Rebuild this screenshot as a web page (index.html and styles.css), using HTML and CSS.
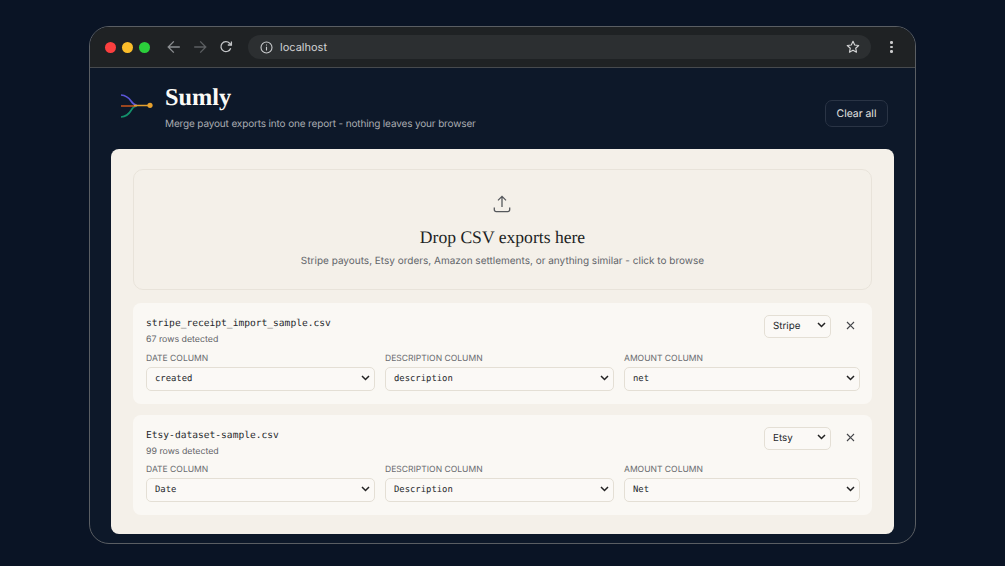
FILE: index.html
```html
<!DOCTYPE html>
<html lang="en">
<head>
<meta charset="utf-8">
<title>Sumly</title>
<link rel="stylesheet" href="styles.css">
</head>
<body>
<div class="window">
  <div class="toolbar">
    <div class="lights"><span class="light red"></span><span class="light yellow"></span><span class="light green"></span></div>
    <div class="nav">
      <svg class="nav-icon" width="14" height="14" viewBox="0 0 14 14" fill="none" stroke="#8b8e91" stroke-width="1.3"><path d="M12.8 7H1.4M6.8 1.4 1.2 7l5.6 5.6"/></svg>
      <svg class="nav-icon" width="14" height="14" viewBox="0 0 14 14" fill="none" stroke="#5c5f62" stroke-width="1.3"><path d="M1.2 7h11.4M7.2 1.4 12.800 7l-5.600 5.600"/></svg>
      <svg class="nav-icon" width="14" height="14" viewBox="0 0 14 14" fill="none" stroke="#c4c6c8" stroke-width="1.3"><path d="M11.7 8.2A5 5 0 1 1 10.6 3.2L12.4 5"/><path d="M12.4 1.4V5H8.8"/></svg>
    </div>
    <div class="address">
      <svg width="13" height="13" viewBox="0 0 13 13" fill="none" stroke="#c8cacc" stroke-width="1.1"><circle cx="6.5" cy="6.5" r="5.5"/><path d="M6.5 5.8v3.6M6.5 3.4v1.2"/></svg>
      <span class="url">localhost</span>
      <svg class="star" width="14" height="14" viewBox="0 0 14 14" fill="none" stroke="#d4d5d6" stroke-width="1.15" stroke-linejoin="round"><path d="M7 1.3 8.7 5l4 .5-3 2.7.8 4L7 10.200 3.500 12.200l.8-4-3-2.700 4-.5z"/></svg>
    </div>
    <div class="menu"><span></span><span></span><span></span></div>
  </div>
  <div class="content">
    <header class="app-header">
      <div class="brand">
        <svg class="logo" width="34" height="28" viewBox="0 0 34 28" fill="none" stroke-width="1.700">
          <path d="M1 3C7 3.500 9 6 11 9S14 13 17 13.500" stroke="#5a55d6"/>
          <path d="M1 25C7 24.500 9 22 11 18.500S14 14.500 17 14" stroke="#14916c"/>
          <path d="M1 14H16" stroke="#c9541c"/>
          <path d="M14 13.500H30" stroke="#e5a02e"/>
          <circle cx="30" cy="13.300" r="2.600" fill="#e5a02e" stroke="none"/>
        </svg>
        <div class="brand-text">
          <h1 class="title">Sumly</h1>
          <p class="tagline">Merge payout exports into one report - nothing leaves your browser</p>
        </div>
      </div>
      <button class="clear" type="button">Clear all</button>
    </header>
    <main class="panel">
      <section class="drop">
        <svg class="upload" width="18" height="18" viewBox="0 0 18 18" fill="none" stroke="#55585c" stroke-width="1.3"><path d="M9 12V1.800M5 5.400 9 1.400l4 4"/><path d="M1.300 12.500v2.300a1.800 1.800 0 0 0 1.800 1.800h11.800a1.800 1.800 0 0 0 1.800-1.800v-2.300"/></svg>
        <h2 class="drop-title">Drop CSV exports here</h2>
        <p class="drop-sub">Stripe payouts, Etsy orders, Amazon settlements, or anything similar - click to browse</p>
      </section>
      <section class="file">
        <div class="file-top">
          <div>
            <div class="file-name">stripe_receipt_import_sample.csv</div>
            <div class="file-rows">67 rows detected</div>
          </div>
          <div class="file-actions">
            <div class="select-wrap source"><select><option>Stripe</option></select><svg class="chev" width="9" height="6" viewBox="0 0 9 6" fill="none" stroke="#222" stroke-width="1.5"><path d="M1 1l3.500 3.500L8 1"/></svg></div>
            <svg class="remove" width="9" height="9" viewBox="0 0 9 9" fill="none" stroke="#44464a" stroke-width="1.200"><path d="M1 1l7 7M8 1 1 8"/></svg>
          </div>
        </div>
        <div class="cols">
          <label class="col"><span class="col-label">DATE COLUMN</span><div class="select-wrap"><select class="mono"><option>created</option></select><svg class="chev" width="9" height="6" viewBox="0 0 9 6" fill="none" stroke="#222" stroke-width="1.5"><path d="M1 1l3.500 3.500L8 1"/></svg></div></label>
          <label class="col"><span class="col-label">DESCRIPTION COLUMN</span><div class="select-wrap"><select class="mono"><option>description</option></select><svg class="chev" width="9" height="6" viewBox="0 0 9 6" fill="none" stroke="#222" stroke-width="1.5"><path d="M1 1l3.500 3.500L8 1"/></svg></div></label>
          <label class="col"><span class="col-label">AMOUNT COLUMN</span><div class="select-wrap"><select class="mono"><option>net</option></select><svg class="chev" width="9" height="6" viewBox="0 0 9 6" fill="none" stroke="#222" stroke-width="1.5"><path d="M1 1l3.500 3.500L8 1"/></svg></div></label>
        </div>
      </section>
      <section class="file">
        <div class="file-top">
          <div>
            <div class="file-name">Etsy-dataset-sample.csv</div>
            <div class="file-rows">99 rows detected</div>
          </div>
          <div class="file-actions">
            <div class="select-wrap source"><select><option>Etsy</option></select><svg class="chev" width="9" height="6" viewBox="0 0 9 6" fill="none" stroke="#222" stroke-width="1.5"><path d="M1 1l3.500 3.500L8 1"/></svg></div>
            <svg class="remove" width="9" height="9" viewBox="0 0 9 9" fill="none" stroke="#44464a" stroke-width="1.200"><path d="M1 1l7 7M8 1 1 8"/></svg>
          </div>
        </div>
        <div class="cols">
          <label class="col"><span class="col-label">DATE COLUMN</span><div class="select-wrap"><select class="mono"><option>Date</option></select><svg class="chev" width="9" height="6" viewBox="0 0 9 6" fill="none" stroke="#222" stroke-width="1.5"><path d="M1 1l3.500 3.500L8 1"/></svg></div></label>
          <label class="col"><span class="col-label">DESCRIPTION COLUMN</span><div class="select-wrap"><select class="mono"><option>Description</option></select><svg class="chev" width="9" height="6" viewBox="0 0 9 6" fill="none" stroke="#222" stroke-width="1.5"><path d="M1 1l3.500 3.500L8 1"/></svg></div></label>
          <label class="col"><span class="col-label">AMOUNT COLUMN</span><div class="select-wrap"><select class="mono"><option>Net</option></select><svg class="chev" width="9" height="6" viewBox="0 0 9 6" fill="none" stroke="#222" stroke-width="1.5"><path d="M1 1l3.500 3.500L8 1"/></svg></div></label>
        </div>
      </section>
    </main>
  </div>
</div>
</body>
</html>
```
FILE: styles.css
```css
* { box-sizing: border-box; margin: 0; padding: 0; }
html, body { height: 100%; overflow: hidden; }
html { text-rendering: geometricPrecision; }
body {
  background: #0a1425;
  font-family: Inter, "Liberation Sans", sans-serif;
  padding: 26px 89px 22px;
}
select, button { text-rendering: geometricPrecision; }
.window {
  width: 827px;
  height: 518px;
  border: 1px solid #5a5e63;
  border-radius: 20px;
  background: #0d1829;
  overflow: hidden;
  will-change: opacity;
}
.toolbar {
  height: 41px;
  background: #1f2224;
  border-bottom: 1px solid #474a4e;
  display: flex;
  align-items: center;
  padding: 0 18px 0 15px;
}
.lights { display: flex; gap: 6px; width: 46px; }
.light { width: 11px; height: 11px; border-radius: 50%; }
.red { background: #fb3f3f; }
.yellow { background: #fbbd2a; }
.green { background: #2bce3b; }
.nav { display: flex; gap: 12px; margin-left: 16px; }
.address {
  margin-left: 15px;
  width: 623px;
  height: 24px;
  background: #2c2f31;
  border-radius: 12px;
  display: flex;
  align-items: center;
  padding: 0 11px 0 12px;
  gap: 7px;
}
.url { color: #d2d3d4; font-size: 11px; flex: 1; }
.menu { display: flex; flex-direction: column; gap: 2px; margin-left: 19px; }
.menu span { width: 2.500px; height: 2.500px; border-radius: 50%; background: #c9cacb; }
.content { padding: 0 21px; }
.app-header {
  height: 81px;
  display: flex;
  justify-content: space-between;
  padding: 16px 6px 0 9px;
}
.brand { display: flex; gap: 11px; }
.logo { margin-top: 8px; }
.title {
  font-family: "Liberation Serif", serif;
  font-size: 24.300px;
  line-height: 28px;
  font-weight: 700;
  color: #fbfaf6;
}
.tagline { font-size: 10px; letter-spacing: -0.150px; line-height: 14px; color: #a9acb1; margin-top: 5px; }
.clear {
  margin-top: 16px;
  width: 63px;
  height: 27px;
  background: #101b2d;
  border: 1px solid #2a3445;
  border-radius: 7px;
  color: #e4e4e2;
  font: 10.400px Inter, "Liberation Sans", sans-serif;
}
.panel {
  height: 385px;
  background: #f4f0e9;
  border-radius: 8px;
  padding: 20px 22px 19px;
  display: flex;
  flex-direction: column;
  gap: 11px;
}
.drop {
  flex: none;
  height: 121px;
  border: 1px solid #e8e3da;
  border-radius: 10px;
  display: flex;
  flex-direction: column;
  align-items: center;
  padding-top: 25px;
  margin-bottom: 2px;
}
.upload { margin-left: -2px; }
.drop-title {
  font-family: "Liberation Serif", serif;
  font-size: 17.600px;
  line-height: 22px;
  font-weight: 400;
  color: #1d1f24;
  margin-top: 13px;
}
.drop-sub { font-size: 10px; line-height: 14px; color: #62656a; margin-top: 6px; }
.file {
  flex: none;
  height: 101px;
  background: #faf8f4;
  border-radius: 8px;
  padding: 11px 12px 0 13px;
}
.file:last-child { height: 100px; }
.file-top { display: flex; justify-content: space-between; height: 39px; }
.file:last-child .file-top { height: 38px; }
.file-name { font: 9.600px/19px "DejaVu Sans Mono", "Liberation Mono", monospace; color: #26282c; }
.file-rows { font-size: 8.800px; line-height: 13px; color: #5f6267; }
.file-actions { display: flex; align-items: center; gap: 15px; height: 23px; padding-right: 5px; }
.select-wrap { position: relative; }
.select-wrap select {
  appearance: none;
  width: 100%;
  height: 24px;
  background: #fbf9f6;
  border: 1px solid #e4dfd5;
  border-radius: 5px;
  color: #26282c;
  padding: 1px 0 0 8px;
  font: 9.800px Inter, "Liberation Sans", sans-serif;
}
.select-wrap select.mono { font: 8.900px "DejaVu Sans Mono", "Liberation Mono", monospace; }
.source { width: 67px; }
.source select { height: 23px; }
.chev { position: absolute; right: 5px; top: 10px; pointer-events: none; }
.source .chev { top: 9px; right: 5px; }
.cols { display: grid; grid-template-columns: 229px 229px 1fr; gap: 10px; }
.col { display: block; }
.col-label { display: block; font-size: 8.550px; line-height: 12px; color: #6a6c70; }
```
